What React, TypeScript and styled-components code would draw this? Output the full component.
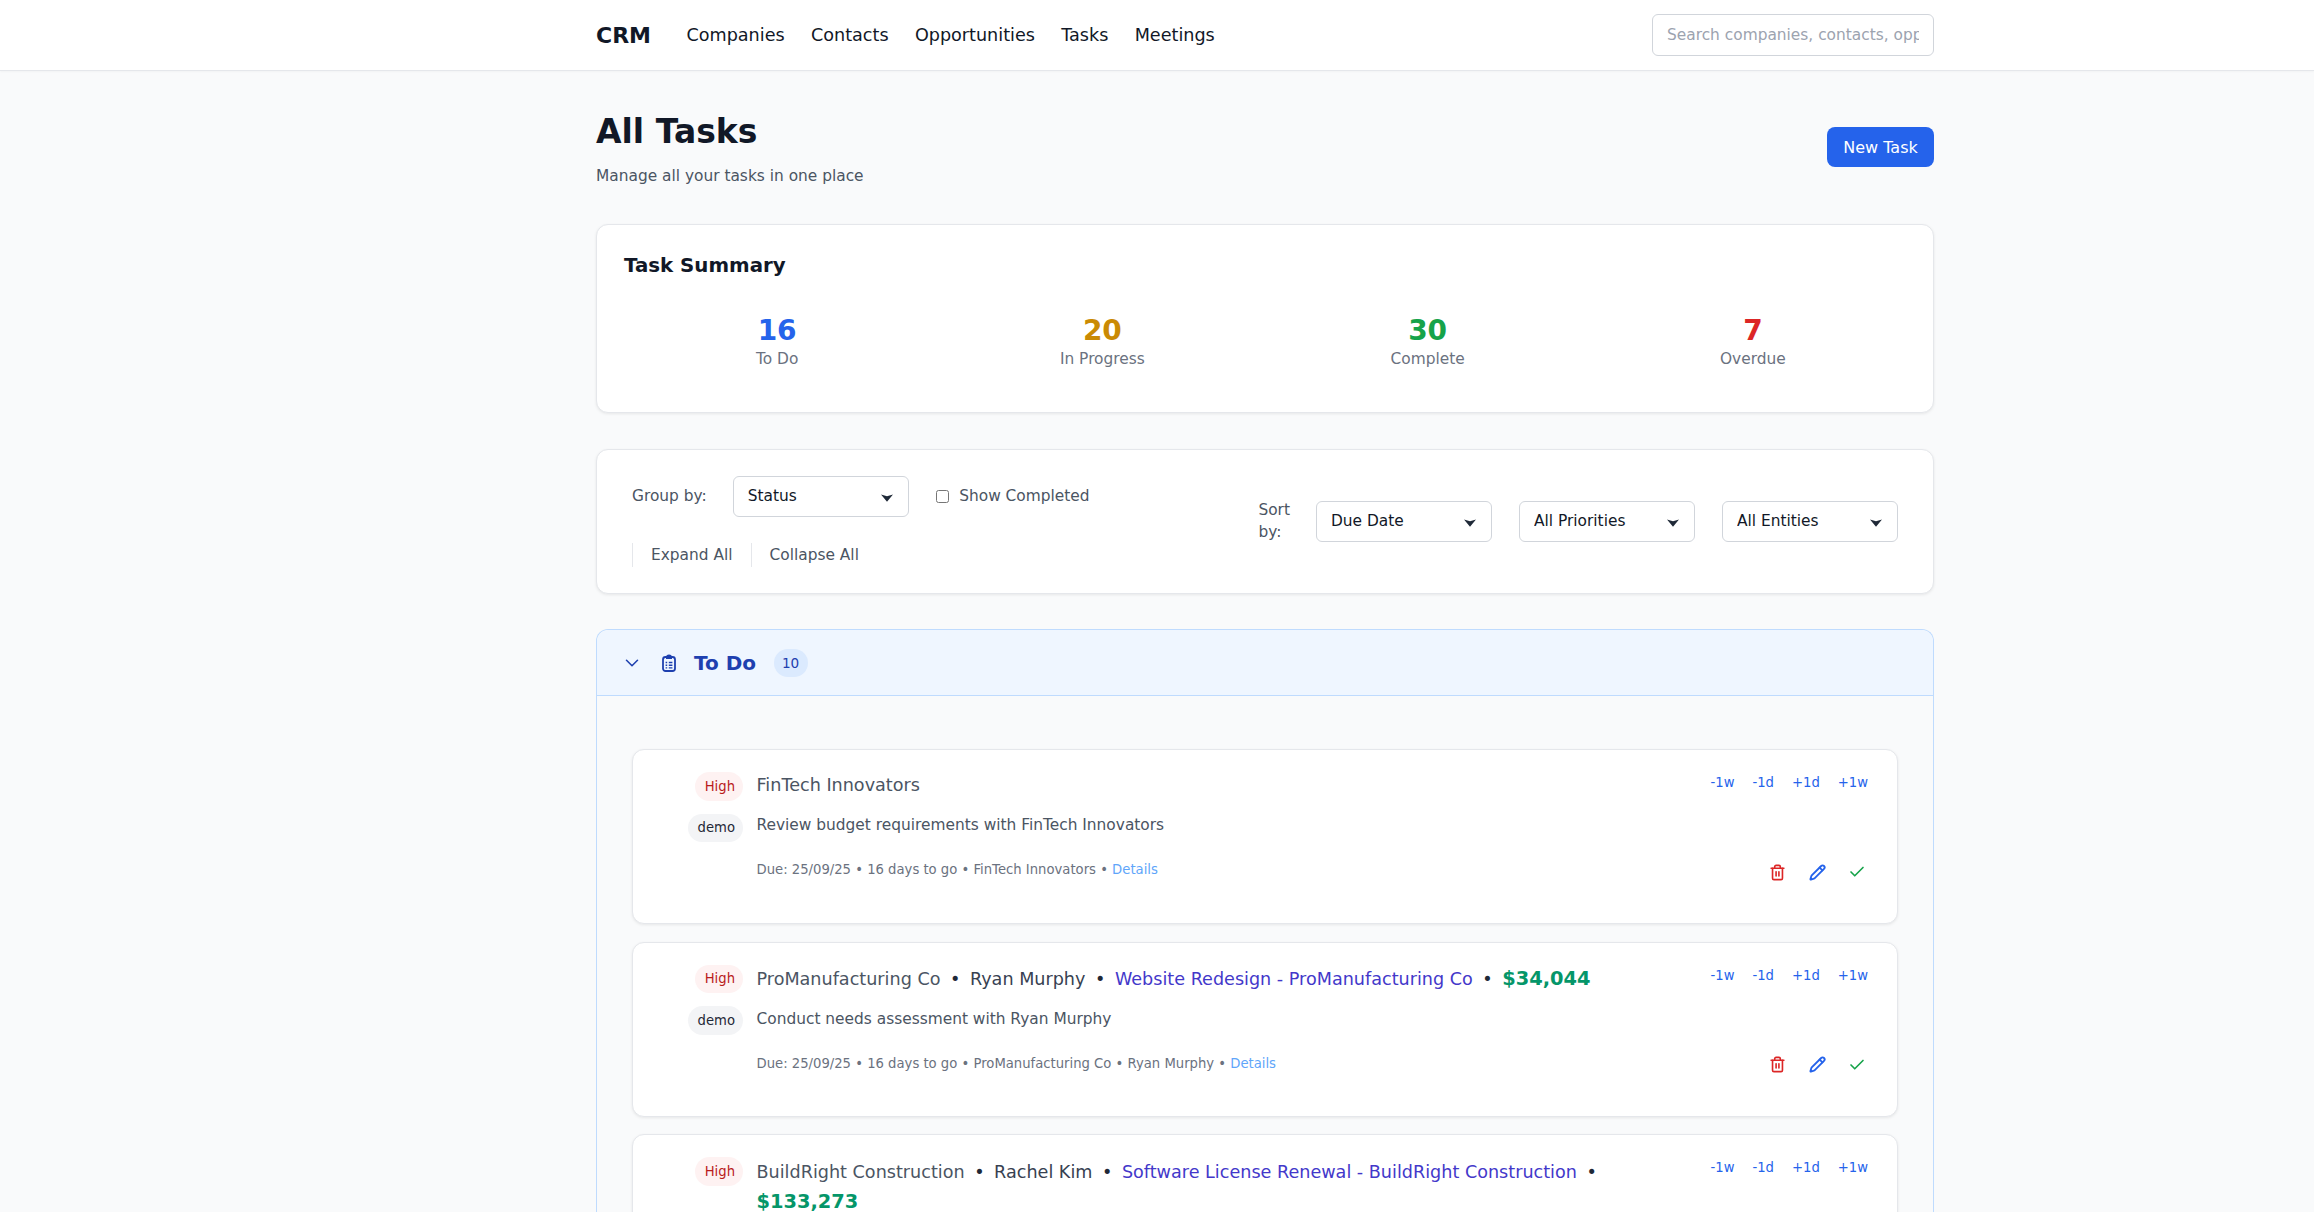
import React from 'react';
import styled, { createGlobalStyle } from 'styled-components';
import { ChevronDown, Trash2, Pencil, Check } from 'lucide-react';

const Global = createGlobalStyle`
  html, body { margin: 0; padding: 0; height: 100%; overflow: hidden; background: #f9fafb; }
  body { font-family: "DejaVu Sans", sans-serif; color: #111827; }
  * { box-sizing: border-box; }
`;

const Page = styled.div`height: 1212px; overflow: hidden; background: #f9fafb;`;
const Nav = styled.nav`
  height: 71px; background: #fff; border-bottom: 1px solid #e5e7eb;
  box-shadow: 0 1px 2px rgba(0,0,0,.03);
  padding: 0 380px 0 596px; display: flex; align-items: center; justify-content: space-between;
`;
const NavLeft = styled.div`display: flex; align-items: center; gap: 35.5px;`;
const Logo = styled.div`font-size: 22px; font-weight: 700; color: #111827;`;
const NavLinks = styled.div`display: flex; gap: 26.3px;`;
const NavLink = styled.a`font-size: 17.6px; color: #111827;`;
const Search = styled.input`
  width: 282px; height: 42px; border: 1px solid #d1d5db; border-radius: 6px; padding: 0 14px;
  font: 15.4px "DejaVu Sans", sans-serif; background: #fff;
  &::placeholder { color: #9ca3af; }
`;
const Main = styled.main`padding: 0 380px 0 596px;`;
const Head = styled.div`display: flex; justify-content: space-between; align-items: flex-start; height: 153px;`;
const TitleBlock = styled.div`padding-top: 40.5px;`;
const Title = styled.h1`font-size: 33px; font-weight: 700; margin: 0 0 14px; color: #111827; line-height: 40px;`;
const Sub = styled.p`font-size: 15.4px; color: #4b5563; margin: 0; line-height: 20px;`;
const NewBtn = styled.button`
  width: 107px; height: 40px; background: #2563eb; color: #fff; border: 0; border-radius: 8px;
  font: 16px "DejaVu Sans", sans-serif; margin-top: 56px;
`;
const Card = styled.section`
  background: #fff; border: 1px solid #e5e7eb; border-radius: 12px; box-shadow: 0 1px 3px rgba(0,0,0,.08);
`;
const Summary = styled(Card)`height: 189px; padding: 29px 27px; margin-bottom: 36px;`;
const SummaryTitle = styled.h2`font-size: 19.8px; font-weight: 700; margin: 0 0 38px; line-height: 24px; color: #111827;`;
const Stats = styled.div`display: grid; grid-template-columns: repeat(4, 1fr); gap: 19px;`;
const Stat = styled.div`text-align: center;`;
const StatNum = styled.div<{ $c: string }>`font-size: 28px; font-weight: 700; line-height: 30px; color: ${p => p.$c};`;
const StatLabel = styled.div`font-size: 15.4px; color: #6b7280; line-height: 26px;`;
const Filters = styled(Card)`
  height: 145px; padding: 27px 35px; margin-bottom: 35px; display: flex; justify-content: space-between; align-items: center;
`;
const FilterLeft = styled.div`display: flex; flex-direction: column; gap: 26px;`;
const Row = styled.div`display: flex; align-items: center;`;
const Label = styled.span`font-size: 15.4px; color: #4b5563; margin-right: 26px; padding-bottom: 2px;`;
const SelectWrap = styled.div`position: relative; display: block; width: 176px; height: 41px;`;
const SelectBox = styled.select`
  appearance: none; width: 100%; height: 100%; border: 1px solid #d1d5db; border-radius: 6px; background: #fff; padding: 0 14px 1px;
  font: 15.4px "DejaVu Sans", sans-serif; color: #111827;
`;
const Arrow = styled.svg`position: absolute; right: 16px; top: 18px; pointer-events: none;`;
const CheckBox = styled.input`margin: 0 10px 0 27.5px; width: 13px; height: 13px;`;
const CheckLabel = styled.label`font-size: 15.4px; color: #4b5563; padding-bottom: 2px;`;
const Ghost = styled.button`
  background: none; border: 0; border-left: 1px solid #e5e7eb; padding: 0 18px; height: 24px;
  font: 15.4px "DejaVu Sans", sans-serif; color: #4b5563;
`;
const FilterRight = styled.div`display: flex; align-items: center; gap: 27px;`;
const SortLabel = styled.span`font-size: 15.4px; color: #4b5563; width: min-content; line-height: 22px; margin-right: -1px; padding-bottom: 1px;`;
const Group = styled.section`border: 1px solid #bfdbfe; border-radius: 12px 12px 0 0; border-bottom: 0;`;
const GroupHead = styled.div`
  height: 66px; background: #eff6ff; border-bottom: 1px solid #bfdbfe; border-radius: 12px 12px 0 0;
  display: flex; align-items: center; padding-left: 24px; color: #1e40af;
`;
const ClipIcon = styled.svg`margin-left: 19px;`;
const GroupTitle = styled.h3`font-size: 20px; font-weight: 700; margin: 0 0 0 18px; color: #1e40af;`;
const Count = styled.span`
  margin-left: 17.5px; width: 34px; height: 28px; border-radius: 14px; background: #dbeafe; color: #1e40af;
  font-size: 13.6px; display: flex; align-items: center; justify-content: center;
`;
const GroupBody = styled.div`padding: 53px 35px 0; display: flex; flex-direction: column; gap: 17.6px;`;
const Task = styled(Card)`
  height: 175px; display: grid; grid-template-columns: 110px 1fr auto; padding: 22px 29px 0 0; column-gap: 13.5px;
`;
const Badges = styled.div`display: flex; flex-direction: column; align-items: flex-end; gap: 13px;`;
const Pill = styled.span<{ $bg: string; $c: string }>`
  height: 28.5px; border-radius: 15px; padding: 0 8px 0 9.5px; display: flex; align-items: center; font-size: 13.2px;
  background: ${p => p.$bg}; color: ${p => p.$c};
`;
const Content = styled.div`min-width: 0;`;
const TaskTitle = styled.div<{ $nudge: number }>`
  font-size: 17.6px; line-height: 29px; color: #4b5563; margin-top: ${p => p.$nudge}px;
`;
const Dot = styled.span`margin: 0 4px 0 9.5px; color: #1f2937;`;
const Person = styled.span`color: #374151;`;
const Opp = styled.a`color: #4338ca;`;
const Amount = styled.span`color: #059669; font-weight: 700; font-size: 19.4px;`;
const Desc = styled.div`font-size: 15.4px; line-height: 20px; color: #4b5563; margin-top: 15px;`;
const Meta = styled.div`font-size: 13.2px; line-height: 20px; color: #6b7280; margin-top: 25px;`;
const Details = styled.a`color: #60a5fa;`;
const Side = styled.div`display: flex; flex-direction: column; align-items: flex-end;`;
const Shift = styled.div`display: flex; gap: 18px; font-size: 13.2px; color: #2563eb; line-height: 20px; padding-top: 1px;`;
const Actions = styled.div`display: flex; gap: 22.5px; align-items: center; margin-top: 71px; padding-right: 2px; height: 16px;`;
const Danger = styled(Trash2)`color: #dc2626;`;
const Edit = styled(Pencil)`color: #2563eb;`;
const Done = styled(Check)`color: #16a34a;`;

function Clip() {
  return (
    <ClipIcon width="14" height="18" viewBox="0 0 14 18" fill="none">
      <rect x="1" y="3" width="12" height="14" rx="2.5" stroke="#1e40af" strokeWidth="1.8" />
      <path d="M4 5V3.5a3 3 0 0 1 6 0V5z" fill="#1e40af" />
      <path d="M3.6 8.5h1.6M6.8 8.5h3.6M3.6 11.2h1.6M6.8 11.2h3.6M3.6 13.9h1.6M6.8 13.9h3.6" stroke="#1e40af" strokeWidth="1.4" />
    </ClipIcon>
  );
}

function Select({ label }: { label: string }) {
  return (
    <SelectWrap>
      <SelectBox defaultValue={label}><option>{label}</option></SelectBox>
      <Arrow width="12" height="8" viewBox="0 0 12 8"><path d="M0 .5l6 1.8L12 .5 6 7.8z" fill="#1f2937" /></Arrow>
    </SelectWrap>
  );
}

const sep = <><Dot>•</Dot>{' '}</>;
const tasks = [
  { nudge: -1, title: <>FinTech Innovators</>, desc: 'Review budget requirements with FinTech Innovators', meta: 'Due: 25/09/25 • 16 days to go • FinTech Innovators • ' },
  { nudge: -1, title: <>ProManufacturing Co{sep}<Person>Ryan Murphy</Person>{sep}<Opp>Website Redesign - ProManufacturing Co</Opp>{sep}<Amount>$34,044</Amount></>, desc: 'Conduct needs assessment with Ryan Murphy', meta: 'Due: 25/09/25 • 16 days to go • ProManufacturing Co • Ryan Murphy • ' },
  { nudge: 1, title: <>BuildRight Construction{sep}<Person>Rachel Kim</Person>{sep}<Opp>Software License Renewal - BuildRight Construction</Opp>{sep}<Amount>$133,273</Amount></>, desc: '', meta: '' },
];

export default function App() {
  return (
    <Page>
      <Global />
      <Nav>
        <NavLeft>
          <Logo>CRM</Logo>
          <NavLinks>
            {['Companies', 'Contacts', 'Opportunities', 'Tasks', 'Meetings'].map(l => <NavLink key={l}>{l}</NavLink>)}
          </NavLinks>
        </NavLeft>
        <Search placeholder="Search companies, contacts, opportunities..." />
      </Nav>
      <Main>
        <Head>
          <TitleBlock>
            <Title>All Tasks</Title>
            <Sub>Manage all your tasks in one place</Sub>
          </TitleBlock>
          <NewBtn>New Task</NewBtn>
        </Head>
        <Summary>
          <SummaryTitle>Task Summary</SummaryTitle>
          <Stats>
            <Stat><StatNum $c="#2563eb">16</StatNum><StatLabel>To Do</StatLabel></Stat>
            <Stat><StatNum $c="#ca8a04">20</StatNum><StatLabel>In Progress</StatLabel></Stat>
            <Stat><StatNum $c="#16a34a">30</StatNum><StatLabel>Complete</StatLabel></Stat>
            <Stat><StatNum $c="#dc2626">7</StatNum><StatLabel>Overdue</StatLabel></Stat>
          </Stats>
        </Summary>
        <Filters>
          <FilterLeft>
            <Row>
              <Label>Group by:</Label>
              <Select label="Status" />
              <CheckBox type="checkbox" />
              <CheckLabel>Show Completed</CheckLabel>
            </Row>
            <Row>
              <Ghost>Expand All</Ghost>
              <Ghost>Collapse All</Ghost>
            </Row>
          </FilterLeft>
          <FilterRight>
            <SortLabel>Sort by:</SortLabel>
            <Select label="Due Date" />
            <Select label="All Priorities" />
            <Select label="All Entities" />
          </FilterRight>
        </Filters>
        <Group>
          <GroupHead>
            <ChevronDown size={22} strokeWidth={1.7} />
            <Clip />
            <GroupTitle>To Do</GroupTitle>
            <Count>10</Count>
          </GroupHead>
          <GroupBody>
            {tasks.map((t, i) => (
              <Task key={i}>
                <Badges>
                  <Pill $bg="#fef2f2" $c="#b91c1c">High</Pill>
                  {i < 2 && <Pill $bg="#f3f4f6" $c="#1f2937">demo</Pill>}
                </Badges>
                <Content>
                  <TaskTitle $nudge={t.nudge}>{t.title}</TaskTitle>
                  {t.desc && <Desc>{t.desc}</Desc>}
                  {t.meta && <Meta>{t.meta}<Details>Details</Details></Meta>}
                </Content>
                <Side>
                  <Shift><span>-1w</span><span>-1d</span><span>+1d</span><span>+1w</span></Shift>
                  {i < 2 && (
                    <Actions>
                      <Danger size={17} strokeWidth={2.3} />
                      <Edit size={17} strokeWidth={2.6} />
                      <Done size={18} strokeWidth={2.2} />
                    </Actions>
                  )}
                </Side>
              </Task>
            ))}
          </GroupBody>
        </Group>
      </Main>
    </Page>
  );
}
